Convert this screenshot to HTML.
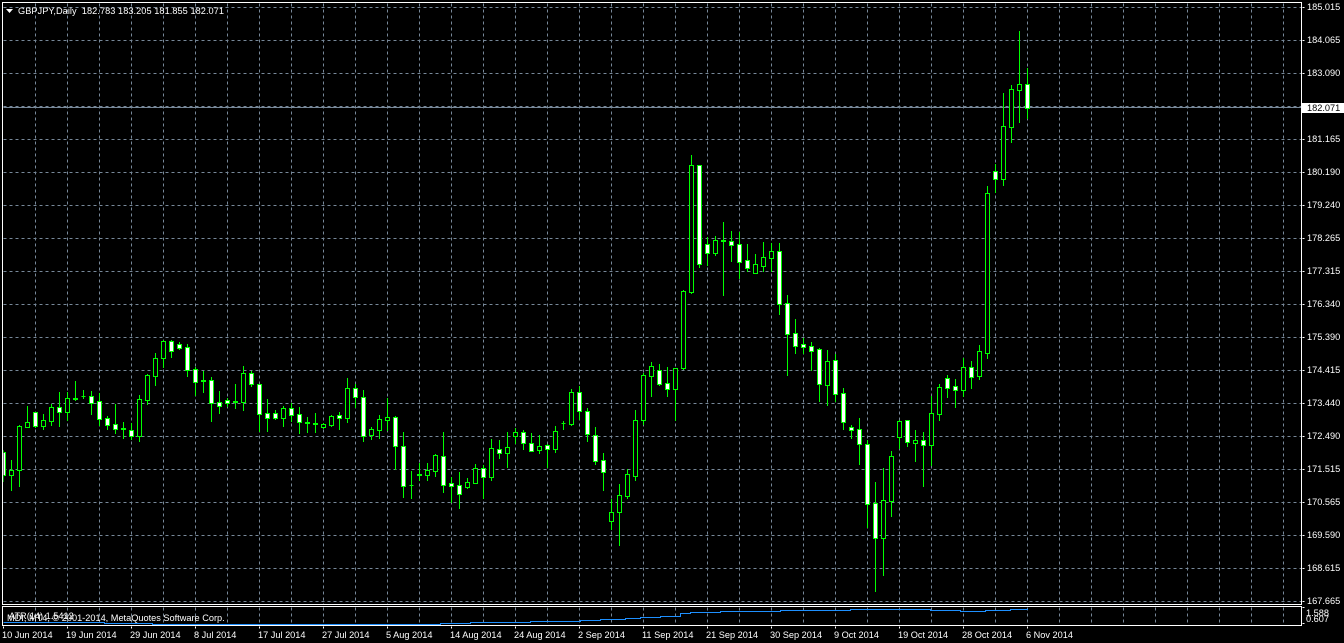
<!DOCTYPE html>
<html><head><meta charset="utf-8"><title>GBPJPY,Daily</title>
<style>html,body{margin:0;padding:0;background:#000;width:1344px;height:643px;overflow:hidden}svg{display:block}text{font-family:"Liberation Sans",sans-serif;font-size:9.2px;fill:#fff}</style></head>
<body>
<svg width="1344" height="643" viewBox="0 0 1344 643" xmlns="http://www.w3.org/2000/svg">
<defs><clipPath id="c"><rect x="3" y="3" width="1298" height="601"/></clipPath></defs>
<rect width="1344" height="643" fill="#000"/>
<g transform="translate(.5 .5)" fill="none" shape-rendering="crispEdges">
<path stroke="#778899" stroke-dasharray="3 3" d="M3 7H1301M3 40H1301M3 73H1301M3 106H1301M3 139H1301M3 172H1301M3 205H1301M3 238H1301M3 271H1301M3 304H1301M3 337H1301M3 370H1301M3 403H1301M3 436H1301M3 469H1301M3 502H1301M3 535H1301M3 568H1301M3 601H1301
M35 3V604M67 3V604M99 3V604M131 3V604M163 3V604M195 3V604M227 3V604M259 3V604M291 3V604M323 3V604M355 3V604M387 3V604M419 3V604M451 3V604M483 3V604M515 3V604M547 3V604M579 3V604M611 3V604M643 3V604M675 3V604M707 3V604M739 3V604M771 3V604M803 3V604M835 3V604M867 3V604M899 3V604M931 3V604M963 3V604M995 3V604M1027 3V604M1059 3V604M1091 3V604M1123 3V604M1155 3V604M1187 3V604M1219 3V604M1251 3V604M1283 3V604
M35 607V625M67 607V625M99 607V625M131 607V625M163 607V625M195 607V625M227 607V625M259 607V625M291 607V625M323 607V625M355 607V625M387 607V625M419 607V625M451 607V625M483 607V625M515 607V625M547 607V625M579 607V625M611 607V625M643 607V625M675 607V625M707 607V625M739 607V625M771 607V625M803 607V625M835 607V625M867 607V625M899 607V625M931 607V625M963 607V625M995 607V625M1027 607V625M1059 607V625M1091 607V625M1123 607V625M1155 607V625M1187 607V625M1219 607V625M1251 607V625M1283 607V625"/>
<path stroke="#778899" d="M3 107H1301"/>
<g clip-path="url(#c)">
<path stroke="#00ff00" stroke-linecap="square" d="M3 450V481M11 460V490M19 425V486M27 406V427M35 412V427M43 414V429M51 404V425M59 392V426M67 392V420M75 381V400M83 390V398M91 391V414M99 393V425M107 416V429M115 404V433M123 422V438M131 423V439M139 395V441M147 374V404M155 353V385M163 340V367M171 340V357M179 342V349M187 344V376M195 367V395M203 371V392M211 377V421M219 391V413M227 398V406M235 384V408M243 366V410M251 371V386M259 384V431M267 399V431M275 410V419M283 406V426M291 403V421M299 407V433M307 417V432M315 413V432M323 423V428M331 415V426M339 412V429M347 378V422M355 384V407M363 390V441M371 427V439M379 415V438M387 398V430M395 416V469M403 432V497M411 471V498M419 463V480M427 463V480M435 454V476M443 432V492M451 477V502M459 472V508M467 478V488M475 464V483M483 465V498M491 439V480M499 440V458M507 432V467M515 428V443M523 430V449M531 433V451M539 435V453M547 444V467M555 426V452M563 421V429M571 389V425M579 386V419M587 408V441M595 427V464M603 453V490M611 499V529M619 484V545M627 469V498M635 410V480M643 373V424M651 362V396M659 364V385M667 367V396M675 368V420M683 290V369M691 155V293M699 165V267M707 237V265M715 236V255M723 222V295M731 231V261M739 232V278M747 244V271M755 254V273M763 242V271M771 243V271M779 243V314M787 295V375M795 319V353M803 338V353M811 342V370M819 348V401M827 350V405M835 354V401M843 388V429M851 425V438M859 418V464M867 440V527M875 482V591M883 468V575M891 451V516M899 420V448M907 420V446M915 430V461M923 432V486M931 396V465M939 384V420M947 375V397M955 379V407M963 358V396M971 361V388M979 345V379M987 186V358M995 164V192M1003 93V185M1011 85V142M1019 31V122M1027 68V118"/>
<path stroke="#00ff00" fill="#fff" d="M1 452h4V475h-4zM33 412h4V426h-4zM57 407h4V412h-4zM89 396h4V403h-4zM97 401h4V419h-4zM105 418h4V425h-4zM113 424h4V429h-4zM129 430h4V436h-4zM169 341h4V351h-4zM177 344h4V348h-4zM185 347h4V370h-4zM193 369h4V382h-4zM209 380h4V403h-4zM217 402h4V406h-4zM225 400h4V403h-4zM249 373h4V384h-4zM257 384h4V414h-4zM265 413h4V418h-4zM273 413h4V418h-4zM289 408h4V415h-4zM297 414h4V422h-4zM337 415h4V418h-4zM353 388h4V397h-4zM361 397h4V436h-4zM393 417h4V446h-4zM401 446h4V486h-4zM441 456h4V485h-4zM449 483h4V486h-4zM457 485h4V494h-4zM481 468h4V477h-4zM497 449h4V453h-4zM521 432h4V443h-4zM529 443h4V451h-4zM545 445h4V449h-4zM577 392h4V411h-4zM585 411h4V434h-4zM593 435h4V461h-4zM601 460h4V472h-4zM657 370h4V384h-4zM665 383h4V389h-4zM697 165h4V264h-4zM705 244h4V253h-4zM729 241h4V245h-4zM737 244h4V262h-4zM745 260h4V268h-4zM777 251h4V304h-4zM785 303h4V334h-4zM793 333h4V346h-4zM801 344h4V347h-4zM809 346h4V351h-4zM817 349h4V384h-4zM833 360h4V394h-4zM841 393h4V422h-4zM849 427h4V430h-4zM857 429h4V444h-4zM865 444h4V504h-4zM873 503h4V538h-4zM905 420h4V442h-4zM921 440h4V445h-4zM945 378h4V388h-4zM953 386h4V390h-4zM969 367h4V377h-4zM993 171h4V179h-4zM1025 84h4V108h-4z"/>
<path stroke="#00ff00" fill="#000" d="M9 470h4V475h-4zM17 426h4V470h-4zM25 422h4V427h-4zM41 420h4V426h-4zM49 407h4V421h-4zM65 398h4V412h-4zM73 398h4V399h-4zM81 396h4V396h-4zM121 428h4V429h-4zM137 399h4V436h-4zM145 375h4V400h-4zM153 358h4V376h-4zM161 341h4V358h-4zM201 380h4V381h-4zM233 401h4V402h-4zM241 373h4V402h-4zM281 408h4V418h-4zM305 422h4V423h-4zM313 423h4V424h-4zM321 424h4V427h-4zM329 416h4V425h-4zM345 388h4V418h-4zM369 429h4V435h-4zM377 419h4V430h-4zM385 417h4V420h-4zM409 485h4V485h-4zM417 474h4V475h-4zM425 470h4V475h-4zM433 455h4V471h-4zM465 482h4V487h-4zM473 468h4V483h-4zM489 448h4V477h-4zM505 447h4V453h-4zM513 432h4V436h-4zM537 446h4V450h-4zM553 431h4V449h-4zM561 423h4V423h-4zM569 392h4V424h-4zM609 512h4V521h-4zM617 495h4V512h-4zM625 474h4V496h-4zM633 420h4V476h-4zM641 375h4V420h-4zM649 366h4V376h-4zM673 368h4V389h-4zM681 291h4V368h-4zM689 165h4V292h-4zM713 240h4V253h-4zM721 240h4V241h-4zM753 264h4V273h-4zM761 257h4V266h-4zM769 251h4V258h-4zM825 361h4V385h-4zM881 500h4V538h-4zM889 456h4V501h-4zM897 421h4V437h-4zM913 440h4V443h-4zM929 413h4V445h-4zM937 387h4V414h-4zM961 367h4V390h-4zM977 351h4V376h-4zM985 193h4V353h-4zM1001 126h4V179h-4zM1009 89h4V127h-4zM1017 84h4V90h-4z"/>
</g>
<path stroke="#1e90ff" d="M3 622H104V623H152V624H440V623H470V622H530V621H580V620H600V619H625V618H640V617H660V616H680V613H690V612H720V611H780V610H850V609H930V610H960V611H985V610H1010V609H1027V608"/>
<path stroke="#fff" d="M2 2H1301V604H2ZM2 606H1301V625H2Z"/>
<path stroke="#fff" d="M1302 7H1304M1302 40H1304M1302 73H1304M1302 139H1304M1302 172H1304M1302 205H1304M1302 238H1304M1302 271H1304M1302 304H1304M1302 337H1304M1302 370H1304M1302 403H1304M1302 436H1304M1302 469H1304M1302 502H1304M1302 535H1304M1302 568H1304M1302 601H1304M1302 607H1304M1302 623H1304
M3 626V628M67 626V628M131 626V628M195 626V628M259 626V628M323 626V628M387 626V628M451 626V628M515 626V628M579 626V628M643 626V628M707 626V628M771 626V628M835 626V628M899 626V628M963 626V628M1027 626V628"/>
</g>
<rect x="1302" y="103" width="42" height="10" fill="#fff"/>
<polygon points="6,9 13,9 9.5,13" fill="#fff"/>
<text x="18" y="14" xml:space="preserve" textLength="206">GBPJPY,Daily  182.783 183.205 181.855 182.071</text>
<text x="9" y="619">ATR(14) 1.5412</text>
<text x="7" y="621">MDI, MT4, © 2001-2014, MetaQuotes Software Corp.</text>
<text x="1307" y="10">185.015</text>
<text x="1307" y="43">184.065</text>
<text x="1307" y="76">183.090</text>
<text x="1307" y="111" style="fill:#000">182.071</text>
<text x="1307" y="142">181.165</text>
<text x="1307" y="175">180.190</text>
<text x="1307" y="208">179.240</text>
<text x="1307" y="241">178.265</text>
<text x="1307" y="274">177.315</text>
<text x="1307" y="307">176.340</text>
<text x="1307" y="340">175.390</text>
<text x="1307" y="373">174.415</text>
<text x="1307" y="406">173.440</text>
<text x="1307" y="439">172.490</text>
<text x="1307" y="472">171.515</text>
<text x="1307" y="505">170.565</text>
<text x="1307" y="538">169.590</text>
<text x="1307" y="571">168.615</text>
<text x="1307" y="604">167.665</text>
<text x="1306" y="616">1.588</text>
<text x="1306" y="622">0.607</text>
<text x="2" y="638">10 Jun 2014</text>
<text x="66" y="638">19 Jun 2014</text>
<text x="130" y="638">29 Jun 2014</text>
<text x="194" y="638">8 Jul 2014</text>
<text x="258" y="638">17 Jul 2014</text>
<text x="322" y="638">27 Jul 2014</text>
<text x="386" y="638">5 Aug 2014</text>
<text x="450" y="638">14 Aug 2014</text>
<text x="514" y="638">24 Aug 2014</text>
<text x="578" y="638">2 Sep 2014</text>
<text x="642" y="638">11 Sep 2014</text>
<text x="706" y="638">21 Sep 2014</text>
<text x="770" y="638">30 Sep 2014</text>
<text x="834" y="638">9 Oct 2014</text>
<text x="898" y="638">19 Oct 2014</text>
<text x="962" y="638">28 Oct 2014</text>
<text x="1026" y="638">6 Nov 2014</text>
</svg>
</body></html>
